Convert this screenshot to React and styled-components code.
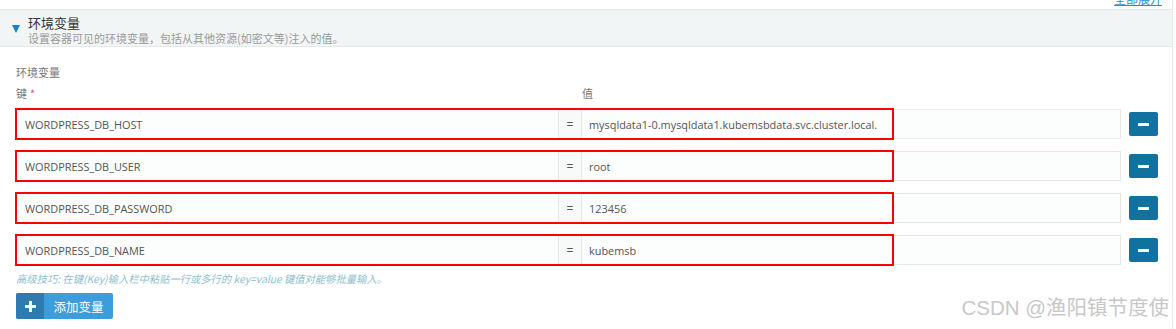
import React from "react";
import styled, { createGlobalStyle } from "styled-components";

const Global = createGlobalStyle`
  html, body { margin: 0; padding: 0; background: #fff; }
  body { font-family: "Open Sans", "Noto Sans", "Noto Sans CJK SC", sans-serif; }
  * { box-sizing: border-box; }
`;

const Page = styled.div`
  width: 1173px;
  height: 329px;
  border-right: 1px solid #e6eaea;
  position: relative;
  overflow: hidden;
`;

const TopBar = styled.div`
  height: 9px;
  overflow: hidden;
  display: flex;
  justify-content: flex-end;
  padding-right: 10px;
`;

const TopLink = styled.a`
  font-size: 12px;
  line-height: 12px;
  margin-top: -7px;
  color: #2e8ccf;
  text-decoration: underline;
  font-family: "Noto Sans CJK SC", sans-serif;
`;

const Header = styled.div`
  height: 38px;
  background: #f2f5f5;
  border-top: 1px solid #e4e9e9;
  border-bottom: 1px solid #e4e9e9;
  display: flex;
  align-items: flex-start;
  padding: 5px 0 0 12px;
`;

const Caret = styled.span`
  width: 0;
  height: 0;
  border-left: 4.5px solid transparent;
  border-right: 4.5px solid transparent;
  border-top: 8px solid #1f7fc4;
  margin-top: 10px;
  margin-right: 8px;
`;

const HeadText = styled.div`
  display: flex;
  flex-direction: column;
`;

const Title = styled.div`
  font-family: "Noto Sans CJK SC", sans-serif;
  font-size: 13px;
  line-height: 16px;
  color: #333;
`;

const Subtitle = styled.div`
  font-family: "Noto Sans CJK SC", sans-serif;
  font-size: 11px;
  line-height: 14px;
  color: #9a9a9a;
`;

const Body = styled.div`
  padding: 18px 0 0 16px;
`;

const Label = styled.div`
  font-family: "Noto Sans CJK SC", sans-serif;
  font-size: 11px;
  line-height: 14px;
  color: #777;
`;

const ColHeads = styled.div`
  display: flex;
  margin-top: 7px;
  margin-bottom: 9px;
`;

const ColHead = styled.div`
  font-family: "Noto Sans CJK SC", sans-serif;
  font-size: 11px;
  line-height: 14px;
  color: #777;
  width: ${(p) => p.$w}px;
`;

const Star = styled.span`
  color: #e05050;
  margin-left: 3px;
`;

const Rows = styled.div`
  display: flex;
  flex-direction: column;
  gap: 12px;
`;

const Row = styled.div`
  display: flex;
  align-items: center;
  position: relative;
`;

const InputGroup = styled.div`
  display: flex;
  width: 1105px;
  height: 30px;
  border: 1px solid #e3e8e8;
  background: #fcfdfd;
`;

const Field = styled.div`
  width: ${(p) => p.$w}px;
  padding-left: ${(p) => p.$pl}px;
  display: flex;
  align-items: center;
  font-size: 10.9px;
  color: #555;
`;

const Addon = styled.div`
  width: 24px;
  border-left: 1px solid #e3e8e8;
  border-right: 1px solid #e3e8e8;
  background: #f8fafa;
  display: flex;
  align-items: center;
  justify-content: center;
  font-size: 12px;
  color: #555;
`;

const MinusBtn = styled.button`
  width: 29px;
  height: 24px;
  margin-left: 8px;
  border: none;
  border-radius: 2px;
  background: #12729f;
  display: flex;
  align-items: center;
  justify-content: center;
  padding: 0;
`;

const MinusBar = styled.span`
  width: 11px;
  height: 3px;
  background: #fff;
`;

const RedBox = styled.div`
  position: absolute;
  left: -1px;
  top: -1px;
  width: 879px;
  height: 32px;
  border: 2px solid #f00;
  pointer-events: none;
`;

const Hint = styled.div`
  margin-top: 7px;
  font-family: "Noto Sans CJK SC", sans-serif;
  font-style: italic;
  font-size: 10.3px;
  line-height: 14px;
  color: #8dbfcf;
`;

const AddBtn = styled.button`
  margin-top: 7px;
  display: flex;
  height: 26px;
  border: none;
  padding: 0;
  border-radius: 2px;
  overflow: hidden;
  background: #3b9ddb;
`;

const PlusPart = styled.span`
  width: 28px;
  height: 26px;
  background: #2e7bb2;
  display: flex;
  align-items: center;
  justify-content: center;
`;

const TextPart = styled.span`
  width: 69px;
  height: 26px;
  display: flex;
  align-items: center;
  justify-content: center;
  color: #fff;
  font-family: "Noto Sans CJK SC", sans-serif;
  font-size: 12.5px;
`;

const Watermark = styled.div`
  position: absolute;
  right: 3px;
  bottom: 8px;
  font-family: "Liberation Sans", "Noto Sans CJK SC", sans-serif;
  font-size: 20.5px;
  color: #c8c8c8;
  text-shadow: 0 0 1px #fff;
`;

const rows = [
  ["WORDPRESS_DB_HOST", "mysqldata1-0.mysqldata1.kubemsbdata.svc.cluster.local."],
  ["WORDPRESS_DB_USER", "root"],
  ["WORDPRESS_DB_PASSWORD", "123456"],
  ["WORDPRESS_DB_NAME", "kubemsb"],
];

export default function App() {
  return (
    <>
      <Global />
      <Page>
        <TopBar>
          <TopLink>全部展开</TopLink>
        </TopBar>
        <Header>
          <Caret />
          <HeadText>
            <Title>环境变量</Title>
            <Subtitle>设置容器可见的环境变量，包括从其他资源(如密文等)注入的值。</Subtitle>
          </HeadText>
        </Header>
        <Body>
          <Label>环境变量</Label>
          <ColHeads>
            <ColHead $w={566}>
              键<Star>*</Star>
            </ColHead>
            <ColHead $w={100}>值</ColHead>
          </ColHeads>
          <Rows>
            {rows.map(([k, v]) => (
              <Row key={k}>
                <InputGroup>
                  <Field $w={541} $pl={8}>{k}</Field>
                  <Addon>=</Addon>
                  <Field $w={538} $pl={7}>{v}</Field>
                </InputGroup>
                <MinusBtn>
                  <MinusBar />
                </MinusBtn>
                <RedBox />
              </Row>
            ))}
          </Rows>
          <Hint>高级技巧: 在键(Key)输入栏中粘贴一行或多行的 key=value 键值对能够批量输入。</Hint>
          <AddBtn>
            <PlusPart>
              <svg width="11" height="11" viewBox="0 0 11 11">
                <rect x="4" y="0" width="3" height="11" fill="#fff" />
                <rect x="0" y="4" width="11" height="3" fill="#fff" />
              </svg>
            </PlusPart>
            <TextPart>添加变量</TextPart>
          </AddBtn>
        </Body>
        <Watermark>CSDN @渔阳镇节度使</Watermark>
      </Page>
    </>
  );
}
